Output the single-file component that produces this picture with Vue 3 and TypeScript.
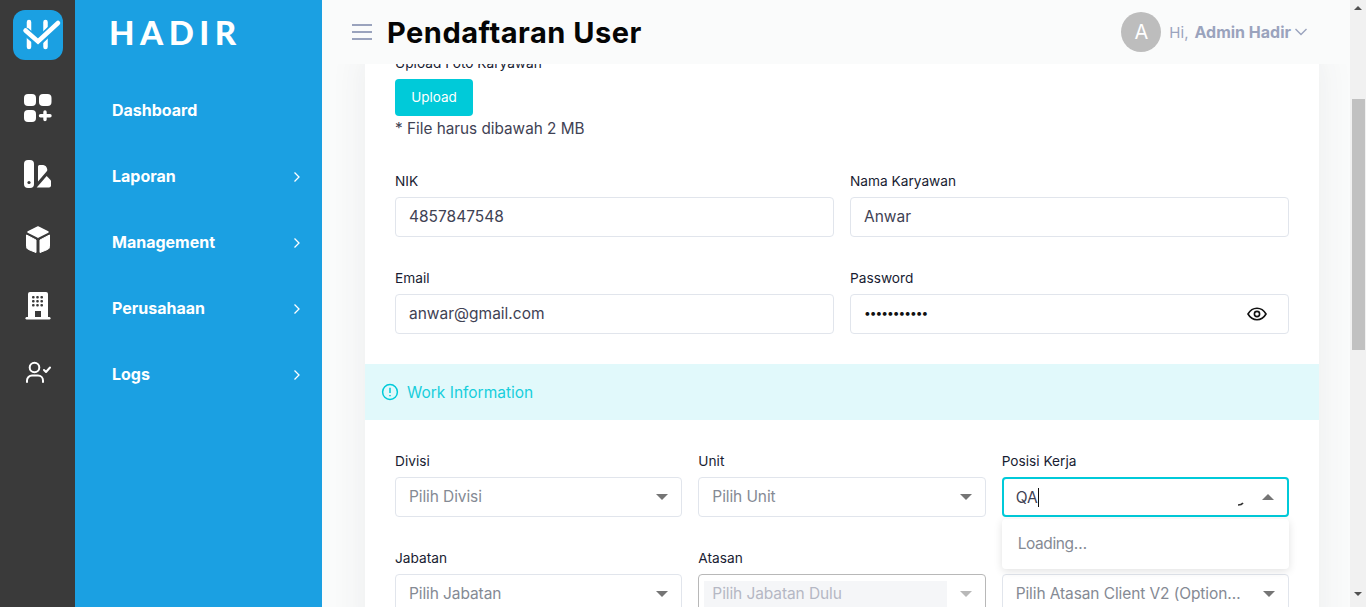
<template>
  <div class="page">
    <nav class="rail">
      <div class="rail-logo">
        <svg width="50" height="50" viewBox="0 0 50 50">
          <path d="M16 12v25M32.500 12v25" stroke="#fff" stroke-width="4.500" stroke-linecap="round" fill="none" />
          <path d="M12 21l13 11L45 13" stroke="#1ba0e2" stroke-width="8.500" fill="none" />
          <path d="M12.500 20.500l12.500 11L45 13" stroke="#fff" stroke-width="4.500" stroke-linecap="round" fill="none" />
        </svg>
      </div>
      <div class="rail-icon">
        <svg width="28" height="28" viewBox="0 0 28 28" fill="#fff">
          <rect x="0" y="0" width="12" height="12" rx="4" />
          <rect x="15" y="0" width="12.500" height="12" rx="4" />
          <rect x="0" y="16" width="12" height="12" rx="4" />
          <path d="M21 18v7.500M16.500 21.800h9.500" stroke="#fff" stroke-width="3.400" stroke-linecap="round" />
        </svg>
      </div>
      <div class="rail-icon">
        <svg width="28" height="28" viewBox="0 0 28 28" fill="#fff">
          <path d="M0 4a4 4 0 0 1 4-4h2a4 4 0 0 1 4 4v20a4 4 0 0 1-4 4H4a4 4 0 0 1-4-4z" />
          <circle cx="5" cy="22.500" r="1.600" fill="#3a3a3a" />
          <path d="M14 6.500a1.500 1.500 0 0 1 1.500-1.500H19c3 0 5 4 4 6L14 21.500z" />
          <path d="M12.700 27.500L22.700 16 27 20.500v5a2 2 0 0 1-2 2z" />
        </svg>
      </div>
      <div class="rail-icon">
        <svg width="26" height="28" viewBox="0 0 26 28" fill="#fff">
          <path d="M13 1l10 5-10 5.200L3 6z" stroke="#fff" stroke-width="1.500" stroke-linejoin="round" />
          <path d="M1.500 9l9.500 5v12.500L3.500 23.500c-1.300-.6-2-1.500-2-3z" stroke="#fff" stroke-width="1" stroke-linejoin="round" />
          <path d="M24.500 9L15 14v12.500l7.500-3c1.300-.6 2-1.500 2-3z" stroke="#fff" stroke-width="1" stroke-linejoin="round" />
        </svg>
      </div>
      <div class="rail-icon">
        <svg width="26" height="28" viewBox="0 0 26 28">
          <path d="M3 2a2 2 0 0 1 2-2h16a2 2 0 0 1 2 2v24H3z" fill="#fff" />
          <rect x="0.500" y="25" width="25" height="2.500" rx="1.200" fill="#fff" />
          <rect x="10" y="19" width="6" height="6" fill="#3a3a3a" />
          <g fill="#3a3a3a">
            <template v-for="y in [4, 8, 12]" :key="y">
              <rect v-for="x in [7, 11.200, 15.400]" :key="x" :x="x" :y="y" width="2.600" height="2.600" rx="1" />
            </template>
          </g>
        </svg>
      </div>
      <div class="rail-icon">
        <svg width="26" height="22" viewBox="0 0 26 22" fill="none" stroke="#fff" stroke-width="2" stroke-linecap="round" stroke-linejoin="round">
          <circle cx="9.500" cy="6.500" r="4.800" />
          <path d="M2 21v-1.500a5 5 0 0 1 5-5h6a5 5 0 0 1 5 5V21" />
          <path d="M19 9l2 2 4-4.500" />
        </svg>
      </div>
    </nav>

    <aside class="sidebar">
      <div class="brand">HADIR</div>
      <ul class="menu">
        <li v-for="item in menu" :key="item.label" class="menu-item">
          <span>{{ item.label }}</span>
          <svg v-if="item.children" class="menu-arrow" width="8" height="12" viewBox="0 0 8 12" fill="none" stroke="#fff" stroke-width="1.300">
            <path d="M1.500 1.500L6 6l-4.500 4.500" />
          </svg>
        </li>
      </ul>
    </aside>

    <div class="main">
      <header class="topbar">
        <div class="burger"><i></i><i></i><i></i></div>
        <h1 class="title">Pendaftaran User</h1>
        <div class="user">
          <span class="avatar">A</span>
          <span class="hi">Hi,</span>
          <b class="user-name">Admin Hadir</b>
          <svg width="14" height="8" viewBox="0 0 14 8" fill="none" stroke="#9aa3bd" stroke-width="1.400">
            <path d="M1.500 1L7 6.500 12.500 1" />
          </svg>
        </div>
      </header>

      <div class="content">
        <section class="card">
          <div class="section">
            <label class="label upload-label">Upload Foto Karyawan</label>
            <button class="upload-btn" type="button">Upload</button>
            <p class="hint">* File harus dibawah 2 MB</p>

            <div class="grid two first-row">
              <div class="field">
                <label class="label">NIK</label>
                <div class="input">4857847548</div>
              </div>
              <div class="field">
                <label class="label">Nama Karyawan</label>
                <div class="input">Anwar</div>
              </div>
              <div class="field">
                <label class="label">Email</label>
                <div class="input">anwar@gmail.com</div>
              </div>
              <div class="field">
                <label class="label">Password</label>
                <div class="input password">
                  <span class="dots">•••••••••••</span>
                  <svg width="20" height="14" viewBox="0 0 20 14" fill="none" stroke="#111" stroke-width="1.600">
                    <path d="M1 7c2.200-3.800 5.200-5.700 9-5.700s6.800 1.900 9 5.700c-2.200 3.800-5.200 5.700-9 5.700S3.200 10.800 1 7z" />
                    <circle cx="10" cy="7" r="2.600" />
                  </svg>
                </div>
              </div>
            </div>
          </div>

          <div class="band">
            <svg width="18" height="18" viewBox="0 0 18 18" fill="none" stroke="#00cad9" stroke-width="1.500">
              <circle cx="9" cy="9" r="7.400" />
              <path d="M9 4.800v5.200M9 12v1.300" />
            </svg>
            <span>Work Information</span>
          </div>

          <div class="section work">
            <div class="grid three">
              <div v-for="s in selects" :key="s.label" class="field">
                <label class="label">{{ s.label }}</label>
                <div class="input select">
                  <span class="placeholder">{{ s.text }}</span>
                  <i class="caret"></i>
                </div>
              </div>
              <div class="field focus-field">
                <label class="label">Posisi Kerja</label>
                <div class="input select focused">
                  <span class="typed">QA</span><i class="cursor"></i>
                  <svg class="spin" width="8" height="6" viewBox="0 0 8 6" fill="none" stroke="#333" stroke-width="1.600">
                    <path d="M1 5c2 0 4-.5 5-2" />
                  </svg>
                  <i class="caret up"></i>
                </div>
                <div class="dropdown">Loading…</div>
              </div>
              <div v-for="s in selectsBottom" :key="s.text" class="field">
                <label v-if="s.label" class="label">{{ s.label }}</label>
                <div class="input select" :class="{ disabled: s.disabled, 'no-label': !s.label }">
                  <span class="placeholder" :class="{ boxed: s.disabled }">{{ s.text }}</span>
                  <i class="caret"></i>
                </div>
              </div>
            </div>
          </div>
        </section>
      </div>
    </div>

    <div class="scrollbar">
      <i class="arrow top"></i>
      <div class="thumb"></div>
      <i class="arrow bottom"></i>
    </div>
  </div>
</template>

<script setup lang="ts">
interface MenuItem {
  label: string
  children?: boolean
}

interface SelectItem {
  label: string
  text: string
  disabled?: boolean
}

const menu: MenuItem[] = [
  { label: 'Dashboard' },
  { label: 'Laporan', children: true },
  { label: 'Management', children: true },
  { label: 'Perusahaan', children: true },
  { label: 'Logs', children: true }
]

const selects: SelectItem[] = [
  { label: 'Divisi', text: 'Pilih Divisi' },
  { label: 'Unit', text: 'Pilih Unit' }
]

// label of the third one sits behind the open dropdown
const selectsBottom: SelectItem[] = [
  { label: 'Jabatan', text: 'Pilih Jabatan' },
  { label: 'Atasan', text: 'Pilih Jabatan Dulu', disabled: true },
  { label: '', text: 'Pilih Atasan Client V2 (Option…' }
]
</script>

<style>
html,
body {
  margin: 0;
  overflow: hidden;
}
</style>

<style scoped>
.page {
  display: flex;
  height: 607px;
  overflow: hidden;
  font-family: Inter, "Noto Sans", sans-serif;
  color: #3f4254;
  background: #fafbfb;
}

.rail {
  width: 75px;
  flex: none;
  background: #3a3a3a;
  display: flex;
  flex-direction: column;
  align-items: center;
  padding-top: 10px;
  box-sizing: border-box;
}

.rail-logo {
  width: 50px;
  height: 50px;
  border-radius: 12px;
  background: #1ba0e2;
  margin-bottom: 15px;
}

.rail-icon {
  height: 66px;
  display: flex;
  align-items: center;
  justify-content: center;
}

.sidebar {
  width: 247px;
  flex: none;
  background: #1ba0e2;
  color: #fff;
}

.brand {
  height: 66px;
  padding-left: 34px;
  font-family: Lato, sans-serif;
  font-weight: 900;
  font-size: 33px;
  line-height: 64px;
  letter-spacing: 5.500px;
}

.menu {
  list-style: none;
  margin: 11px 0 0;
  padding: 0 21px 0 37px;
}

.menu-item {
  height: 66px;
  display: flex;
  align-items: center;
  justify-content: space-between;
  font-size: 16px;
  font-weight: 700;
}

.menu-arrow {
  margin-top: 2px;
}

.main {
  flex: 1;
  min-width: 0;
  display: flex;
  flex-direction: column;
}

.topbar {
  height: 64px;
  flex: none;
  display: flex;
  align-items: center;
  padding: 0 42px 0 30px;
  background: #fafbfb;
  position: relative;
  z-index: 2;
}

.burger {
  width: 20px;
  display: flex;
  flex-direction: column;
  gap: 5px;
  margin-right: 15px;
}

.burger i {
  display: block;
  height: 2px;
  background: #9aa3bd;
}

.title {
  margin: 0;
  font-size: 29px;
  font-weight: 700;
  color: #050505;
  letter-spacing: 0.500px;
}

.user {
  margin-left: auto;
  display: flex;
  align-items: center;
  color: #9aa3bd;
  font-size: 15px;
}

.avatar {
  width: 40px;
  height: 40px;
  border-radius: 50%;
  background: #bdbdbd;
  color: #fff;
  font-size: 20px;
  display: flex;
  align-items: center;
  justify-content: center;
  margin-right: 8px;
}

.hi {
  margin-right: 6px;
}

.user-name {
  font-size: 16px;
  margin-right: 3px;
}

.content {
  flex: 1;
  min-height: 0;
  overflow: hidden;
  padding: 0 31px 0 43px;
}

.card {
  background: #fff;
  margin-top: -11px;
  box-shadow: 0 0 34px rgba(60, 70, 80, 0.08);
}

.section {
  padding: 0 30px 30px;
}

.label {
  display: block;
  font-size: 13.700px;
  line-height: 20px;
  color: #181c32;
  margin-bottom: 6px;
}

.upload-btn {
  display: block;
  width: 78px;
  height: 37px;
  padding: 0 0 2px;
  border: 0;
  border-radius: 4px;
  background: #00cad9;
  color: #fff;
  font: 13.500px Inter, sans-serif;
}

.hint {
  margin: 1px 0 0;
  font-size: 15.300px;
  line-height: 24px;
}

.grid {
  display: grid;
  gap: 31px 16px;
}

.two {
  grid-template-columns: 1fr 1fr;
}

.three {
  grid-template-columns: 1fr 1fr 1fr;
}

.first-row {
  margin-top: 30px;
}

.field {
  position: relative;
  min-width: 0;
}

.input {
  height: 40px;
  box-sizing: border-box;
  border: 1px solid #e1e5ec;
  border-radius: 4px;
  padding: 0 14px 2px 13px;
  display: flex;
  align-items: center;
  font-size: 15.500px;
  color: #3f4254;
}

.password {
  justify-content: space-between;
  padding: 0 21px 0 13px;
}

.dots {
  color: #111;
  font-size: 12px;
  letter-spacing: -1px;
  margin-bottom: 3px;
}

.band {
  height: 56px;
  background: #e1f9fb;
  display: flex;
  align-items: center;
  gap: 8px;
  padding-left: 16px;
  color: #17cedc;
  font-size: 15.500px;
}

.work {
  padding-top: 31px;
}

.select {
  justify-content: space-between;
  padding: 0 13px 0 13px;
}

.select .placeholder {
  margin-bottom: 1px;
}

.no-label {
  margin-top: 26px;
}

.placeholder {
  color: #858a94;
  white-space: nowrap;
  letter-spacing: -0.100px;
}

.caret {
  width: 0;
  height: 0;
  border-left: 6px solid transparent;
  border-right: 6px solid transparent;
  border-top: 6px solid #757575;
}

.caret.up {
  border-top: 0;
  border-bottom: 6px solid #757575;
  margin-left: 17px;
}

.focus-field {
  z-index: 3;
}

.focused {
  justify-content: flex-start;
  border: 2px solid #00cad9;
  padding-left: 12px;
  padding-right: 13px;
}

.typed {
  color: #3f4254;
}

.cursor {
  width: 1px;
  height: 19px;
  background: #111;
}

.spin {
  margin-left: auto;
  margin-top: 12px;
}

.dropdown {
  position: absolute;
  left: 0;
  right: 0;
  top: 68px;
  height: 50px;
  box-sizing: border-box;
  padding: 0 16px 2px;
  background: #fff;
  border-radius: 4px;
  box-shadow: 0 2px 8px rgba(0, 0, 0, 0.12);
  display: flex;
  align-items: center;
  font-size: 15.500px;
  letter-spacing: -0.400px;
  color: #858a94;
}

.disabled {
  border-color: #b8b8b8;
  padding-left: 5px;
}

.disabled .placeholder {
  color: #b5b8c4;
}

.boxed {
  background: #f5f6f8;
  width: 243px;
  box-sizing: border-box;
  height: 26px;
  line-height: 26px;
  padding-left: 8px;
  margin-bottom: 0;
}

.disabled .caret {
  border-top-color: #b8b8b8;
}

.scrollbar {
  width: 16px;
  flex: none;
  background: #f1f1f1;
  display: flex;
  flex-direction: column;
  align-items: center;
}

.arrow {
  width: 0;
  height: 0;
  border-left: 4px solid transparent;
  border-right: 4px solid transparent;
}

.arrow.top {
  margin-top: 6px;
  border-bottom: 4px solid #505050;
}

.arrow.bottom {
  margin-top: 242px;
  border-top: 4px solid #505050;
}

.thumb {
  width: 13px;
  height: 251px;
  margin-top: 89px;
  background: #c1c1c1;
}
</style>
